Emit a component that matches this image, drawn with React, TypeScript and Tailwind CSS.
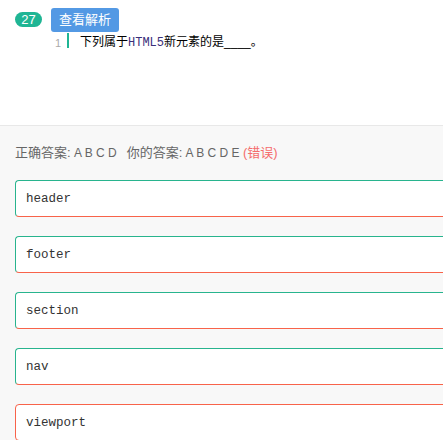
const OPTIONS = [
  { text: 'header', correct: true },
  { text: 'footer', correct: true },
  { text: 'section', correct: true },
  { text: 'nav', correct: true },
  { text: 'viewport', correct: false },
]

export default function App() {
  return (
    <div className="w-[443px] h-[440px] overflow-hidden bg-white font-['Liberation_Sans','Noto_Sans_CJK_SC',sans-serif]">
      <div className="h-[126px] border-b border-[#e8e8e8] flex pl-[15px] pt-[8px]">
        <div className="mt-[4px] w-[27px] h-[15px] rounded-full bg-[#1fb594] text-white text-[13px] leading-[15px] text-center">
          27
        </div>
        <div className="ml-[9px] flex flex-col">
          <div className="w-[68px] h-[24px] rounded-[3px] bg-[#5399e4] text-white text-[13px] leading-[24px] text-center">
            查看解析
          </div>
          <div className="flex h-[15px] mt-[1px]">
            <span className="w-[10px] ml-[4px] text-[11px] text-[#aaa] leading-[15px] mt-[3px]">1</span>
            <span className="ml-[2px] w-[2px] h-[15px] bg-[#1fb594]" />
            <span className="ml-[11px] text-[12px] text-black leading-[15px] mt-[2px] whitespace-nowrap">
              下列属于<span className="font-['Liberation_Mono',monospace] text-[12px] text-[#3a2f7a]">HTML5</span>新元素的是____。
            </span>
          </div>
        </div>
      </div>
      <div className="bg-[#f8f8f8] h-[314px] pl-[15px]">
        <div className="pt-[19px] h-[54px] text-[13px] text-[#666] leading-[15px] whitespace-nowrap">
          正确答案:<span className="text-[12px]"> A B C D</span>
          <span className="ml-[10px]">你的答案:</span>
          <span className="text-[12px]"> A B C D E </span>
          <span className="text-[#f56c6c]">(错误)</span>
        </div>
        <div className="flex flex-col gap-[19px]">
          {OPTIONS.map(o => (
            <div
              key={o.text}
              className={
                'w-[480px] h-[37px] rounded-[4px] bg-white border border-[#f8634a] flex items-center pl-[10px] pt-[2px] ' +
                (o.correct ? 'border-t-[#28b48e] border-l-[#28b48e]' : '')
              }
            >
              <span className="font-['Liberation_Mono',monospace] text-[12.5px] text-[#333]">{o.text}</span>
            </div>
          ))}
        </div>
      </div>
    </div>
  )
}
